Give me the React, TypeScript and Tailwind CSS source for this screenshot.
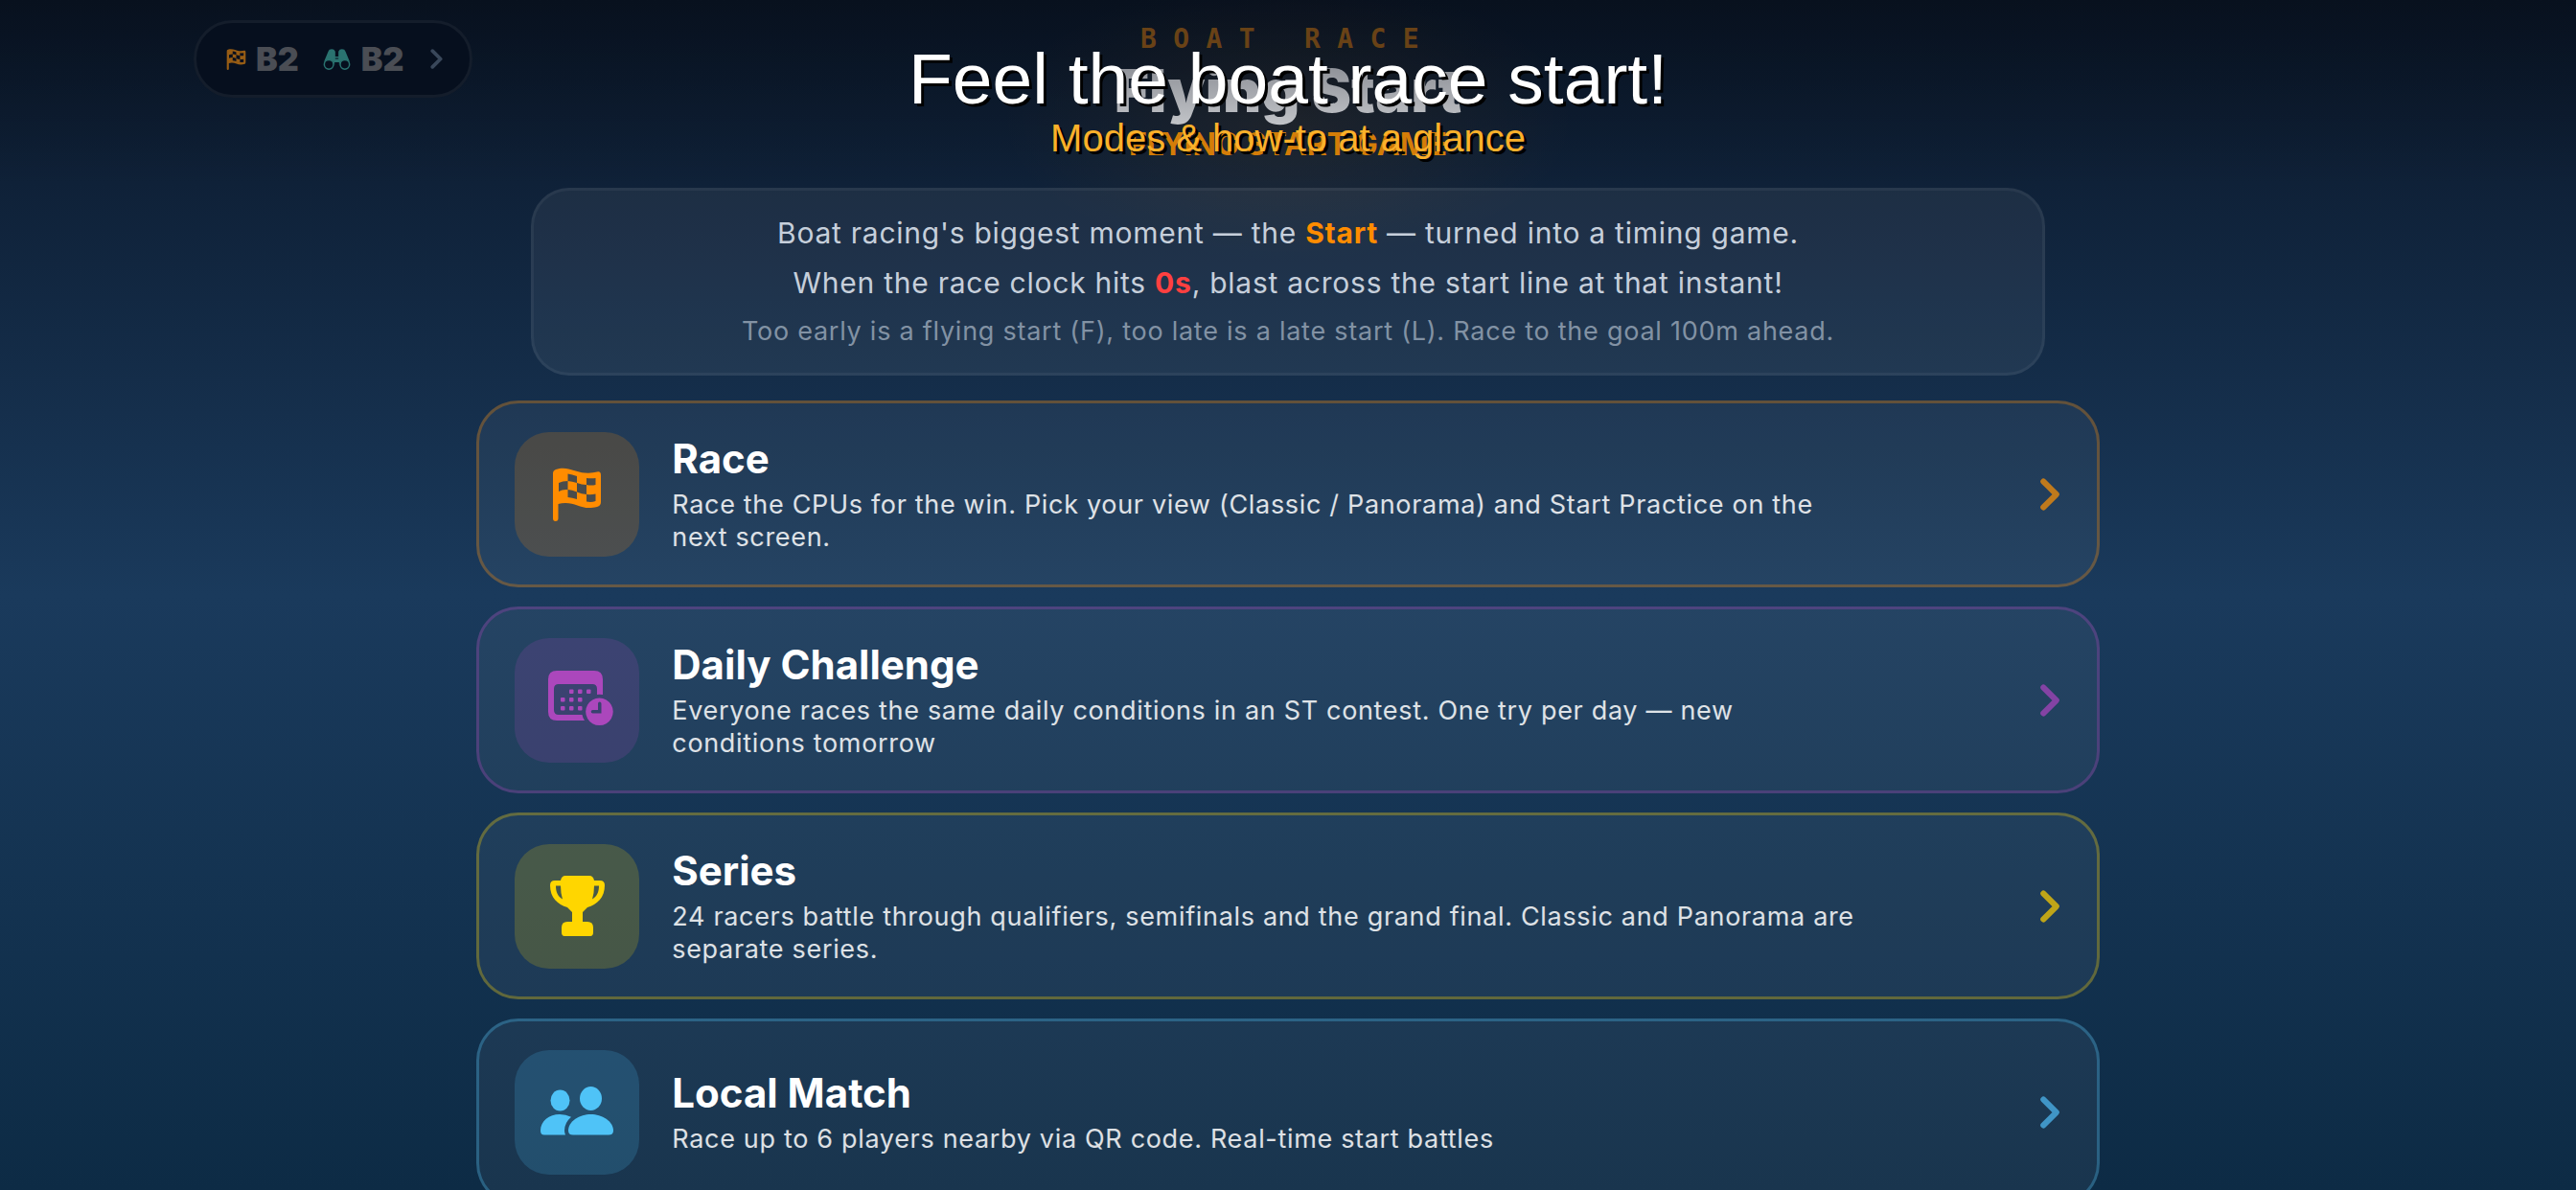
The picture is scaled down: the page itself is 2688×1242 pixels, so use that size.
import React from "react";

type Tone = "orange" | "purple" | "yellow" | "blue";

interface ModeCardProps {
  title: string;
  description: string;
  tone: Tone;
  icon: React.ReactNode;
}

const tones: Record<Tone, { card: string; tile: string; chevron: string }> = {
  orange: {
    card: "border-[#ff8c00]/30",
    tile: "bg-[#ff8c00]/18 text-[#ff8c00]",
    chevron: "text-[#c07a1c]",
  },
  purple: {
    card: "border-[#ab47bc]/30",
    tile: "bg-[#ab47bc]/18 text-[#ab47bc]",
    chevron: "text-[#8443a4]",
  },
  yellow: {
    card: "border-[#ffd600]/30",
    tile: "bg-[#ffd600]/18 text-[#ffd600]",
    chevron: "text-[#bfa518]",
  },
  blue: {
    card: "border-[#4fc3f7]/30",
    tile: "bg-[#4fc3f7]/18 text-[#4fc3f7]",
    chevron: "text-[#4095c6]",
  },
};

const Chevron = ({ className }: { className: string }) => (
  <svg viewBox="0 0 20 34" fill="none" className={className}>
    <path
      d="M3.200 3.500 L16.800 17 L3.200 30.500"
      stroke="currentColor"
      strokeWidth="6"
      strokeLinecap="round"
      strokeLinejoin="round"
    />
  </svg>
);

const FlagIcon = ({ className }: { className: string }) => (
  <svg viewBox="0 0 52 56" fill="currentColor" className={className}>
    <path
      fillRule="evenodd"
      d="M1 6 Q1 3 4 2 C16 -2 24 5 34 5.500 Q42 6 47 4.500 Q51 3.500 51 8 V36 Q51 40 47 41 C32 45 26 37 14 37 Q10 37 6.500 38 V53 Q6.500 56 3.700 56 Q1 56 1 53 Z
      M16.500 6.500 V14 Q21 14.500 26 16 V9 Q21 7 16.500 6.500 Z
      M36 11 V18 Q41 19 45.500 18 V11 Q41 11.500 36 11 Z
      M7 16 V25 Q11 22.500 16.500 23 V14 Q11 14 7 16 Z
      M26 16 V25.500 Q31 27.500 36 28 V18 Q31 18 26 16 Z
      M16.500 23 V31 Q21 31.500 26 33 V25.500 Q21 23 16.500 23 Z
      M36 28 V35.500 Q41 36.500 45.500 35 V27.500 Q41 28.500 36 28 Z"
    />
  </svg>
);

const BinocularsIcon = ({ className }: { className: string }) => (
  <svg viewBox="0 0 86 66" className={className}>
    <path
      d="M16 8 Q18 1 27 1 Q35 1 38 8 V24 H48 V8 Q51 1 59 1 Q68 1 70 8 L84 42 Q70 30 55 40 L50 50 H36 L31 40 Q16 30 2 42 Z"
      fill="currentColor"
    />
    <g stroke="currentColor" strokeWidth="4.500" className="fill-[#060f1e]">
      <circle cx="18" cy="49" r="14.500" />
      <circle cx="68" cy="49" r="14.500" />
    </g>
    <path d="M38 30 H48" stroke="#060f1e" strokeWidth="3" />
    <path d="M36 42 H50 V66 H36 Z" className="fill-[#060f1e]" />
  </svg>
);

const CalendarIcon = () => (
  <svg viewBox="-9 0 78 61" fill="currentColor" className="h-[61px] w-[78px]">
    <path
      fillRule="evenodd"
      d="M9 0 H48 Q57 0 57 9 V25 Q53 24.500 51 25 V19 Q51 14 46 14 H11 Q6 14 6 19 V41 Q6 46 11 46 H35.500 Q36 49 38 52 H9 Q0 52 0 43 V9 Q0 0 9 0 Z"
    />
    {[
      [22, 19.5],
      [31, 19.5],
      [40, 19.5],
      [13, 28],
      [22, 28],
      [31, 28],
      [13, 37],
      [22, 37],
      [31, 37],
    ].map(([x, y]) => (
      <rect key={`${x}-${y}`} x={x} y={y} width="4.500" height="4.500" rx="1" />
    ))}
    <path
      fillRule="evenodd"
      d="M53.500 28.500 A14.300 14.300 0 1 1 53.400 28.500 Z M53.700 32.500 Q52 32.500 52 34.500 V41 H46.500 Q44.700 41 44.700 42.800 Q44.700 44.500 46.500 44.500 H55.500 V34.500 Q55.500 32.500 53.700 32.500 Z"
    />
  </svg>
);

const TrophyIcon = () => (
  <svg viewBox="0 0 57 63" fill="currentColor" className="h-[63px] w-[57px]">
    <path
      fillRule="evenodd"
      d="M16 0 H41 Q45 0 46 5 H52 Q57 5 57 10 C57 23 49 30 39 33 Q36 36 34 38 V48 H39 Q45 48 45 54 V59 Q45 63 42 63 H15 Q12 63 12 59 V54 Q12 48 18 48 H23 V38 Q21 36 18 33 C8 30 0 23 0 10 Q0 5 5 5 H11 Q12 0 16 0 Z
      M6 10.500 C6 17 8 21.500 13 24.500 Q11 18 11 10.500 Z
      M51 10.500 H46 Q46 18 44 24.500 C49 21.500 51 17 51 10.500 Z"
    />
  </svg>
);

const PeopleIcon = () => (
  <svg viewBox="0 0 77 54" fill="currentColor" className="h-[54px] w-[77px]">
    <ellipse cx="20.500" cy="14.500" rx="10" ry="11" />
    <ellipse cx="52.500" cy="12.500" rx="11.500" ry="12.500" />
    <path d="M4 50.500 Q0 50.500 0 46 C0 36 9 29 20 29 Q26.500 29 32 31.800 Q25 38 25 46 Q25 48.500 26 50.500 Z" />
    <path d="M34 50.500 Q29 50.500 29 46 C29 36 41 29 52.500 29 C64 29 76 36 76 46 Q76 50.500 71 50.500 Z" />
  </svg>
);

const ModeCard = ({ title, description, tone, icon }: ModeCardProps) => {
  const t = tones[tone];
  return (
    <button
      type="button"
      className={`flex h-[195px] w-full items-center gap-[34px] rounded-[44px] border-3 bg-white/5 pr-[39px] pl-[37px] text-left ${t.card}`}
    >
      <span
        className={`flex size-[130px] shrink-0 items-center justify-center rounded-[36px] ${t.tile}`}
      >
        {icon}
      </span>
      <span className="flex flex-1 flex-col gap-[6px]">
        <span className="text-[42px] leading-[50px] font-bold text-white">
          {title}
        </span>
        <span className="max-w-[1244px] text-[27px] leading-[34px] tracking-wide text-white/85">
          {description}
        </span>
      </span>
      <Chevron className={`h-[34px] w-[20px] shrink-0 ${t.chevron}`} />
    </button>
  );
};

const RankPill = () => (
  <button
    type="button"
    className="flex h-[81px] w-[291px] items-center rounded-full border-3 border-[#141d2b] bg-[#060f1e] pl-[31px] text-[34px] font-black text-[#4a4d54]"
  >
    <FlagIcon className="h-[22px] w-[21px] text-[#965c14]" />
    <span className="ml-[10px]">B2</span>
    <BinocularsIcon className="ml-[25px] h-[22px] w-[29px] text-[#2a7370]" />
    <span className="ml-[11px]">B2</span>
    <Chevron className="mr-[28px] ml-auto h-[21px] w-[13px] text-[#39475a]" />
  </button>
);

export default function App() {
  return (
    <div className="relative h-screen overflow-hidden bg-[radial-gradient(ellipse_300px_150px_at_50%_125px,rgba(255,140,0,0.08),rgba(255,140,0,0.04)_50%,transparent),linear-gradient(to_bottom,#0a1628,#1a3a5c_50%,#0d2b45)] font-['Inter','Liberation_Sans',sans-serif]">
      <header className="grid h-[196px] grid-cols-[1fr_auto_1fr] items-start bg-linear-to-b from-black/25 to-transparent">
        <div className="pt-[21px] pl-[202px]">
          <RankPill />
        </div>
        <div className="flex flex-col items-center pt-[25px] text-center">
          <p className="font-['DejaVu_Sans_Mono',monospace] text-[28px] leading-[32px] font-bold tracking-[0.62em] text-[#694216]">
            BOAT RACE
          </p>
          <h1 className="bg-linear-to-b from-[#85888f] to-[#c4c6ca] bg-clip-text text-[62px] leading-[76px] font-black text-transparent">
            Flying Start
          </h1>
          <p className="text-[32px] leading-[36px] font-bold text-[#d47d08]">
            FLYING START GAME
          </p>
        </div>
      </header>

      <main className="mx-auto flex w-[63%] flex-col items-center">
        <section className="flex w-full max-w-[1580px] flex-col gap-4 rounded-[40px] border-3 border-white/5 bg-white/6 py-[26px] text-center text-[30px] leading-[36px] tracking-wide text-[#c6cfdb]">
          <p>
            Boat racing's biggest moment — the{" "}
            <strong className="text-[#ff8c00]">Start</strong> — turned into a
            timing game.
          </p>
          <p>
            When the race clock hits{" "}
            <strong className="text-[#ff4040]">0s</strong>, blast across the
            start line at that instant!
          </p>
          <p className="text-[27px] leading-[34px] text-[#8292a4]">
            Too early is a flying start (F), too late is a late start (L). Race
            to the goal 100m ahead.
          </p>
        </section>

        <div className="mt-[26px] flex w-full flex-col gap-5">
          <ModeCard
            tone="orange"
            title="Race"
            description="Race the CPUs for the win. Pick your view (Classic / Panorama) and Start Practice on the next screen."
            icon={<FlagIcon className="h-[56px] w-[52px]" />}
          />
          <ModeCard
            tone="purple"
            title="Daily Challenge"
            description="Everyone races the same daily conditions in an ST contest. One try per day — new conditions tomorrow"
            icon={<CalendarIcon />}
          />
          <ModeCard
            tone="yellow"
            title="Series"
            description="24 racers battle through qualifiers, semifinals and the grand final. Classic and Panorama are separate series."
            icon={<TrophyIcon />}
          />
          <ModeCard
            tone="blue"
            title="Local Match"
            description="Race up to 6 players nearby via QR code. Real-time start battles"
            icon={<PeopleIcon />}
          />
        </div>
      </main>

      {/* caption laid over the header */}
      <div className="absolute inset-x-0 top-[40px] text-center font-['Liberation_Sans',Arial,sans-serif] [text-shadow:3px_3px_0_#000]">
        <p className="text-[75px] leading-[84px] text-white">
          Feel the boat race start!
        </p>
        <p className="text-[40px] leading-[40px] text-[#fbb12a]">
          Modes &amp; how-to at a glance
        </p>
      </div>
    </div>
  );
}
